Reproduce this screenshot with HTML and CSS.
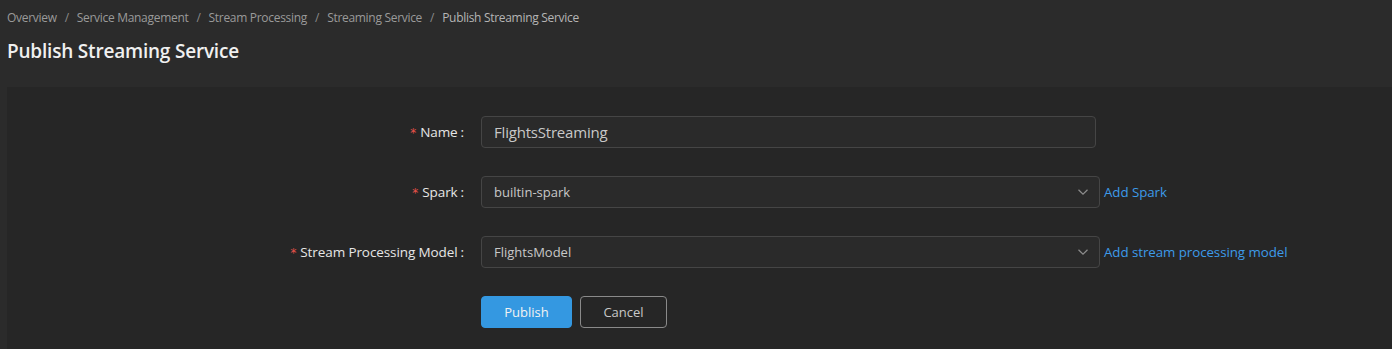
FILE: index.html
```html
<!DOCTYPE html>
<html>
<head>
<meta charset="utf-8">
<link rel="stylesheet" href="styles.css">
</head>
<body>
<div class="page">
  <nav class="breadcrumb">
    <span class="crumb">Overview</span><span class="sep">/</span>
    <span class="crumb">Service Management</span><span class="sep">/</span>
    <span class="crumb">Stream Processing</span><span class="sep">/</span>
    <span class="crumb">Streaming Service</span><span class="sep">/</span>
    <span class="crumb current">Publish Streaming Service</span>
  </nav>
  <h1 class="title">Publish Streaming Service</h1>
  <div class="panel">
    <form class="form">
      <div class="row">
        <label class="label"><span class="req">*</span>Name<span class="colon">:</span></label>
        <div class="control">
          <div class="input">FlightsStreaming</div>
        </div>
      </div>
      <div class="row">
        <label class="label"><span class="req">*</span>Spark<span class="colon">:</span></label>
        <div class="control">
          <div class="select"><span>builtin-spark</span>
            <svg class="arrow" width="12" height="12" viewBox="0 0 12 12"><path d="M1.5 3.8 L6 8.2 L10.5 3.8" fill="none" stroke="#8c8c8c" stroke-width="1.2"/></svg>
          </div>
          <a class="link">Add Spark</a>
        </div>
      </div>
      <div class="row">
        <label class="label"><span class="req">*</span>Stream Processing Model<span class="colon">:</span></label>
        <div class="control">
          <div class="select"><span>FlightsModel</span>
            <svg class="arrow" width="12" height="12" viewBox="0 0 12 12"><path d="M1.5 3.8 L6 8.2 L10.5 3.8" fill="none" stroke="#8c8c8c" stroke-width="1.2"/></svg>
          </div>
          <a class="link">Add stream processing model</a>
        </div>
      </div>
      <div class="row buttons">
        <div class="label"></div>
        <div class="control">
          <button type="button" class="btn primary">Publish</button>
          <button type="button" class="btn default">Cancel</button>
        </div>
      </div>
    </form>
  </div>
</div>
</body>
</html>
```

FILE: styles.css
```css
html, body {
  margin: 0;
  padding: 0;
  background: #2b2b2b;
  height: 100%;
  overflow: hidden;
}
body {
  font-family: "Open Sans", "Noto Sans", sans-serif;
  color: #e0e0e0;
}
.page {
  padding: 0 0 0 7px;
  height: 100%;
  box-sizing: border-box;
  display: flex;
  flex-direction: column;
}
.breadcrumb {
  display: flex;
  align-items: center;
  height: 34px;
  font-size: 12px;
  color: #9a9a9a;
  letter-spacing: -0.3px;
  flex: none;
}
.sep {
  margin: 0 8px;
  color: #8a8a8a;
}
.crumb.current {
  color: #b5b5b5;
}
.title {
  margin: 0;
  font-size: 19px;
  font-weight: 600;
  color: #f0f0f0;
  height: 53px;
  line-height: 34px;
  letter-spacing: -0.2px;
  flex: none;
}
.panel {
  background: #262626;
  flex: 1;
  padding-top: 29px;
  overflow: hidden;
}
.form {
  display: flex;
  flex-direction: column;
  gap: 28px;
}
.row {
  display: flex;
  align-items: center;
  height: 32px;
}
.label {
  width: 457px;
  box-sizing: content-box;
  flex: none;
  text-align: right;
  font-size: 13.5px;
  color: #e6e6e6;
  padding-right: 17px;
  letter-spacing: -0.1px;
}
.req {
  color: #e8524a;
  margin-right: 4px;
  font-family: "DejaVu Sans", sans-serif;
  font-size: 12px;
}
.colon {
  margin-left: 3px;
}
.control {
  display: flex;
  align-items: center;
  gap: 4px;
}
.input, .select {
  box-sizing: border-box;
  height: 32px;
  border: 1px solid #454545;
  border-radius: 4px;
  background: #2a2a2a;
  display: flex;
  align-items: center;
  padding: 0 12px;
  color: #c8c8c8;
}
.input {
  width: 615px;
  font-size: 15px;
  letter-spacing: -0.2px;
}
.select {
  width: 619px;
  font-size: 13px;
  justify-content: space-between;
}
.arrow {
  margin-right: -2px;
}
.link {
  color: #3d9be9;
  font-size: 13.3px;
  letter-spacing: -0.05px;
}
.buttons .control {
  gap: 8px;
}
.btn {
  box-sizing: border-box;
  height: 32px;
  border-radius: 4px;
  font-family: "Open Sans", "Noto Sans", sans-serif;
  font-size: 13px;
  cursor: pointer;
}
.btn.primary {
  width: 91px;
  background: #3498e1;
  border: 1px solid #3498e1;
  color: #f2f2f2;
}
.btn.default {
  width: 87px;
  background: transparent;
  border: 1px solid #8a8a8a;
  color: #c8c8c8;
}
```
